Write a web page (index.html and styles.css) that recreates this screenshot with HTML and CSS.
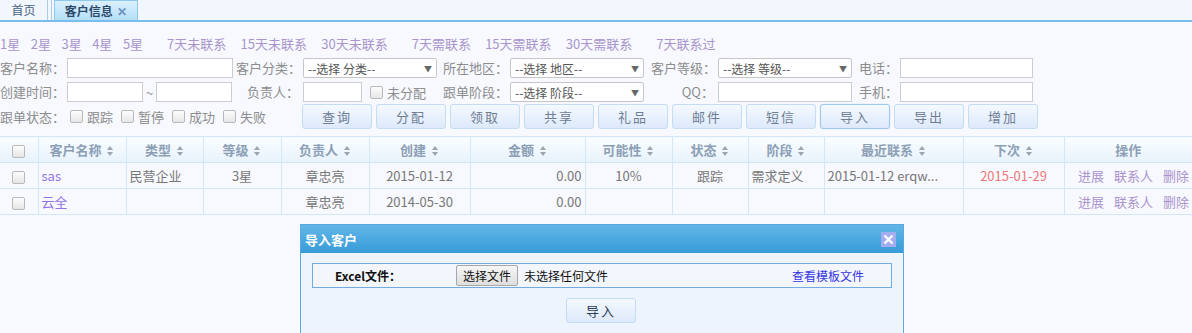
FILE: index.html
```html
<!DOCTYPE html>
<html lang="zh-CN">
<head>
    <meta charset="UTF-8">
    <title>客户信息</title>
    <link rel="stylesheet" href="styles.css">
</head>
<body>
    <div class="tabs">
        <div class="tab">首页</div>
        <div class="tab-sep"></div>
        <div class="tab active">客户信息 <span class="tab-close">✕</span></div>
    </div>

    <div class="quick">
        <a class="q">1星</a><a class="q">2星</a><a class="q">3星</a><a class="q">4星</a><a class="q wide">5星</a>
        <a class="q mid">7天未联系</a><a class="q mid">15天未联系</a><a class="q wide">30天未联系</a>
        <a class="q mid">7天需联系</a><a class="q mid">15天需联系</a><a class="q wide">30天需联系</a>
        <a class="q">7天联系过</a>
    </div>

    <div class="filters">
        <label class="lbl">客户名称：</label>
        <div class="cell"><span class="inp w166"></span></div>
        <label class="lbl">客户分类：</label>
        <div class="cell"><span class="sel">--选择 分类--<i>▼</i></span></div>
        <label class="lbl">所在地区：</label>
        <div class="cell"><span class="sel">--选择 地区--<i>▼</i></span></div>
        <label class="lbl">客户等级：</label>
        <div class="cell"><span class="sel">--选择 等级--<i>▼</i></span></div>
        <label class="lbl">电话：</label>
        <div class="cell"><span class="inp w133"></span></div>

        <label class="lbl">创建时间：</label>
        <div class="cell"><span class="inp w76"></span><span class="tilde">~</span><span class="inp w76"></span></div>
        <label class="lbl">负责人：</label>
        <div class="cell"><span class="inp w59"></span><span class="cb ml8"></span><span class="cbt">未分配</span></div>
        <label class="lbl">跟单阶段：</label>
        <div class="cell"><span class="sel">--选择 阶段--<i>▼</i></span></div>
        <label class="lbl">QQ：</label>
        <div class="cell"><span class="inp w134"></span></div>
        <label class="lbl">手机：</label>
        <div class="cell"><span class="inp w133"></span></div>
    </div>

    <div class="actions">
        <label class="lbl">跟单状态：</label>
        <div class="states">
            <span class="cb"></span><span class="cbt">跟踪</span>
            <span class="cb"></span><span class="cbt">暂停</span>
            <span class="cb"></span><span class="cbt">成功</span>
            <span class="cb"></span><span class="cbt">失败</span>
        </div>
        <div class="btns">
            <button class="btn">查询</button>
            <button class="btn">分配</button>
            <button class="btn">领取</button>
            <button class="btn">共享</button>
            <button class="btn">礼品</button>
            <button class="btn">邮件</button>
            <button class="btn">短信</button>
            <button class="btn focus">导入</button>
            <button class="btn">导出</button>
            <button class="btn">增加</button>
        </div>
    </div>

    <table class="grid">
        <colgroup>
            <col style="width:38px"><col style="width:88px"><col style="width:77px"><col style="width:78px">
            <col style="width:88px"><col style="width:101px"><col style="width:115px"><col style="width:87px">
            <col style="width:76px"><col style="width:76px"><col style="width:139px"><col style="width:101px">
            <col>
        </colgroup>
        <thead>
            <tr>
                <th><span class="cb"></span></th>
                <th>客户名称 <i class="sort"></i></th>
                <th>类型 <i class="sort"></i></th>
                <th>等级 <i class="sort"></i></th>
                <th>负责人 <i class="sort"></i></th>
                <th>创建 <i class="sort"></i></th>
                <th>金额 <i class="sort"></i></th>
                <th>可能性 <i class="sort"></i></th>
                <th>状态 <i class="sort"></i></th>
                <th>阶段 <i class="sort"></i></th>
                <th>最近联系 <i class="sort"></i></th>
                <th>下次 <i class="sort"></i></th>
                <th>操作</th>
            </tr>
        </thead>
        <tbody>
            <tr>
                <td class="c"><span class="cb"></span></td>
                <td><a class="name">sas</a></td>
                <td>民营企业</td>
                <td class="c">3星</td>
                <td class="c">章忠亮</td>
                <td class="c">2015-01-12</td>
                <td class="r">0.00</td>
                <td class="c">10%</td>
                <td class="c">跟踪</td>
                <td>需求定义</td>
                <td>2015-01-12 erqw...</td>
                <td class="c next">2015-01-29</td>
                <td class="ops"><a>进展</a><a>联系人</a><a>删除</a></td>
            </tr>
            <tr>
                <td class="c"><span class="cb"></span></td>
                <td><a class="name">云全</a></td>
                <td></td>
                <td></td>
                <td class="c">章忠亮</td>
                <td class="c">2014-05-30</td>
                <td class="r">0.00</td>
                <td></td>
                <td></td>
                <td></td>
                <td></td>
                <td></td>
                <td class="ops"><a>进展</a><a>联系人</a><a>删除</a></td>
            </tr>
        </tbody>
    </table>

    <div class="dialog">
        <div class="dlg-title">
            <span>导入客户</span>
            <span class="dlg-close">
                <svg width="15" height="15" viewBox="0 0 15 15"><path d="M3.5 3.5 L11.5 11.5 M11.5 3.5 L3.5 11.5" stroke="#fff" stroke-width="2.4"/></svg>
            </span>
        </div>
        <div class="dlg-body">
            <div class="upload">
                <span class="up-lbl">Excel文件：</span>
                <span class="file-btn">选择文件</span>
                <span class="file-txt">未选择任何文件</span>
                <a class="tpl">查看模板文件</a>
            </div>
            <div class="dlg-foot">
                <button class="btn">导入</button>
            </div>
        </div>
    </div>
</body>
</html>
```

FILE: styles.css
```css
body {
    margin: 0;
    background: #f7f9fe;
    font-family: "Noto Sans CJK SC", "Noto Sans", sans-serif;
    font-size: 13px;
    color: #777;
    height: 333px;
    overflow: hidden;
    position: relative;
}

/* tab bar */
.tabs {
    display: flex;
    height: 20px;
    border-bottom: 2px solid #79bdec;
    background: #f2f6fd;
}

.tab {
    width: 47px;
    line-height: 20px;
    text-align: center;
    font-size: 12px;
    color: #4a6384;
}

.tab-sep {
    width: 3px;
    margin-right: 2px;
    border-left: 1px solid #a9cde9;
    border-right: 1px solid #a9cde9;
}

.tab.active {
    width: 82px;
    border: 1px solid #8cc9ef;
    border-bottom: none;
    background: linear-gradient(#dcf0fd, #b4def8);
    color: #2e4a6a;
    font-weight: bold;
    line-height: 19px;
}

.tab-close {
    color: #6a93c4;
    font-size: 12px;
    margin-left: 2px;
}

/* quick filters */
.quick {
    display: flex;
    height: 23px;
    line-height: 23px;
    margin-top: 10px;
    white-space: nowrap;
}

.q {
    color: #a995cc;
    margin-right: 10.5px;
}

.q.mid {
    margin-right: 14.25px;
}

.q.wide {
    margin-right: 24px;
}

/* filter form */
.filters {
    display: grid;
    grid-template-columns: 67px 169px 67px 140px 67px 141px 67px 141px 41px 133px;
    row-gap: 4px;
    margin-top: 3px;
}

.lbl {
    text-align: right;
    padding-right: 4px;
    line-height: 20px;
    color: #8d8d8d;
    white-space: nowrap;
}

.filters .lbl:nth-child(1),
.filters .lbl:nth-child(11),
.actions .lbl {
    text-align: left;
}

.filters .lbl:nth-child(3),
.filters .lbl:nth-child(5),
.filters .lbl:nth-child(7),
.filters .lbl:nth-child(15) {
    text-align: left;
    padding-left: 0;
}

.cell {
    display: flex;
    align-items: center;
    height: 20px;
}

.inp {
    display: inline-block;
    height: 18px;
    border: 1px solid #cdcdcd;
    background: #fff;
    box-sizing: content-box;
}

.w166 { width: 164px; }
.w133 { width: 131px; }
.w134 { width: 132px; }
.w76 { width: 74px; }
.w59 { width: 57px; }

.tilde {
    width: 13px;
    text-align: center;
    color: #999;
}

.sel {
    display: flex;
    justify-content: space-between;
    align-items: center;
    width: 124px;
    height: 18px;
    padding: 0 4px 0 4px;
    border: 1px solid #c6c6c6;
    border-radius: 2px;
    background: #fff;
    color: #555;
    font-size: 12px;
}

.sel i {
    font-style: normal;
    font-size: 8px;
    color: #666;
}

.cb {
    display: inline-block;
    width: 11px;
    height: 11px;
    border: 1px solid #b9b9b9;
    border-radius: 2px;
    background: linear-gradient(#fdfdfd, #e6e6e6);
    vertical-align: middle;
}

.cbt {
    margin-left: 4px;
    color: #8d8d8d;
}

.ml8 {
    margin-left: 8px;
}

/* states and buttons */
.actions {
    display: flex;
    align-items: center;
    margin-top: 2px;
    height: 25px;
}

.actions .lbl {
    width: 63px;
}

.states {
    width: 232px;
    padding-left: 3px;
    display: flex;
    align-items: center;
}

.states .cbt {
    margin-right: 8px;
}

.btns {
    display: flex;
    gap: 4px;
}

.btn {
    width: 70px;
    height: 25px;
    border: 1px solid #c4dcf4;
    border-radius: 3px;
    background: linear-gradient(#f5f9ff, #dde9fb);
    color: #6f7e94;
    font-family: inherit;
    font-size: 13px;
    letter-spacing: 2px;
    padding: 0;
}

.btn.focus {
    border-color: #9ec8f2;
    box-shadow: 0 0 1px #9ec8f2;
}

/* table */
.grid {
    width: 1192px;
    border-collapse: collapse;
    table-layout: fixed;
    margin-top: 7px;
}

.grid th {
    height: 25px;
    background: linear-gradient(#fafdff, #e7f2fc);
    border: 1px solid #d4e7f8;
    color: #8c9fb6;
    font-weight: bold;
    text-align: center;
    padding: 0;
    white-space: nowrap;
}

.grid td {
    height: 25px;
    border: 1px solid #d4e7f8;
    padding: 0 3px;
    white-space: nowrap;
    overflow: hidden;
}

.grid td.c {
    text-align: center;
}

.grid td.r {
    text-align: right;
}

.grid tr > :first-child {
    border-left: none;
}

.grid tr > :last-child {
    border-right: none;
}

/* up/down sort marker */
.sort {
    display: inline-block;
    width: 7px;
    height: 10px;
    margin-left: 3px;
    vertical-align: -1px;
    position: relative;
}

.sort::before,
.sort::after {
    content: "";
    position: absolute;
    left: 0;
    border-left: 3.5px solid transparent;
    border-right: 3.5px solid transparent;
}

.sort::before {
    top: 0;
    border-bottom: 4px solid #9aa5b0;
}

.sort::after {
    bottom: 0;
    border-top: 4px solid #9aa5b0;
}

.name {
    color: #9173e6;
}

.next {
    color: #f07777;
}

.ops {
    text-align: right;
}

.ops a {
    color: #ab93cd;
    margin-left: 10px;
}

/* dialog */
.dialog {
    position: absolute;
    left: 300px;
    top: 224px;
    width: 602px;
    height: 120px;
    border: 1px solid #5aa8dd;
    background: #eef4fd;
}

.dlg-title {
    height: 28px;
    display: flex;
    align-items: center;
    justify-content: space-between;
    padding: 0 7px 0 4px;
    background: linear-gradient(#62b6e8, #389bd8);
    color: #fff;
    font-weight: bold;
}

.dlg-close {
    width: 15px;
    height: 15px;
    background: #a3aef0;
    display: flex;
}

.dlg-body {
    padding: 10px 11px 0 11px;
}

.upload {
    display: flex;
    align-items: center;
    height: 23px;
    border: 1px solid #72abe0;
    background: #f3f7fd;
    color: #111;
    font-size: 12px;
}

.up-lbl {
    width: 121px;
    padding-left: 22px;
    font-weight: bold;
}

.file-btn {
    height: 19px;
    line-height: 19px;
    padding: 0 6px;
    border: 1px solid #a7a7a7;
    border-radius: 2px;
    background: linear-gradient(#f6f6f6, #dedede);
    margin-right: 6px;
}

.file-txt {
    flex: 1;
}

.tpl {
    color: #3535e6;
    margin-right: 27px;
}

.dlg-foot {
    display: flex;
    justify-content: center;
    margin-top: 10px;
}

.dlg-foot .btn {
    color: #2e3d52;
    margin-left: -2px;
}
```
